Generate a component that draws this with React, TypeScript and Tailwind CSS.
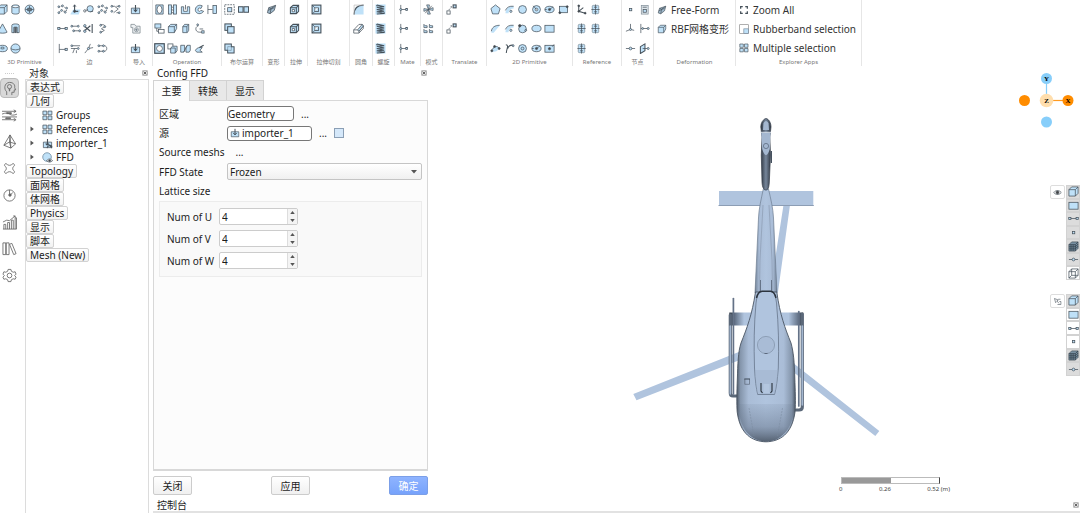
// src/App.tsx
import React, { useState } from 'react';

// Small 12x12 drawings shared by the ribbon, the tree and the view toolbars
const ICONS: Record<string, React.ReactNode> = {
  box: <path d="M1 4 L4 1 H11 V8 L8 11 H1 Z M1 4 H8 V11 M8 4 L11 1" />,
  cylinder: <path d="M2 2.5 C2 .5 10 .5 10 2.5 V9.5 C10 11.5 2 11.5 2 9.5 Z M2 2.5 C2 4.5 10 4.5 10 2.5" />,
  sphereDot: <><circle cx="6" cy="6" r="4.8" /><path d="M1.5 6 H10.5 M6 2 V10" /><path d="M4 4.5 H8 V7.5 H4 Z" fill="#667885" /></>,
  cone: <path d="M6 1 L11 10 C9 11.5 3 11.5 1 10 Z" />,
  tube: <><path d="M2 2.5 C2 .5 10 .5 10 2.5 V10.5 H7.5 V4.5 H4.5 V10.5 H2 Z" /><path d="M4.5 4.5 V11 M7.5 4.5 V11 M6 4.5 V11" strokeWidth="1" /></>,
  torus: <><ellipse cx="6" cy="6" rx="5.3" ry="3.5" /><ellipse cx="6" cy="5.5" rx="2" ry="1" /></>,
  globe: <><circle cx="6" cy="6" r="5" /><path d="M1 6 C3 8 9 8 11 6" /></>,
  scatter: <><path d="M2 3 L6 2 M2 9 L5 7 M7 8 L11 7 M8 3.5 L10 4.5" fill="none" strokeDasharray="1.5 1" /><circle cx="2" cy="3" r="1" /><circle cx="6" cy="2" r="1" /><circle cx="10.5" cy="4.5" r="1" /><circle cx="5" cy="7" r="1" /><circle cx="2" cy="9.5" r="1" /><circle cx="9" cy="9" r="1" /></>,
  axisUp: <><path d="M1 10 L3.5 6 H11.5 L9.5 11.5 H.5 Z" stroke="none" /><path d="M5 1 V8 H9" fill="none" strokeWidth="1.2" /><circle cx="5" cy="8" r="1.2" fill="#444" /><path d="M3.5 3 L5 .8 L6.5 3" fill="none" /></>,
  loop: <><circle cx="7.8" cy="5.2" r="3.4" /><circle cx="2" cy="7.5" r="1.3" fill="#fff" /><path d="M3 7.5 L5 5.5 M8 8.5 L11 8" /></>,
  zigzag: <><path d="M1.5 2.5 H5 L9 5.5 L4 9.5 M7 2.5 H10.5 M7 9.5 H10.5" fill="none" /><circle cx="2" cy="2.5" r="1" /><circle cx="10" cy="2.5" r="1" /><circle cx="10" cy="9.5" r="1" /><circle cx="2" cy="8" r="1" /></>,
  segment: <><path d="M2 6 H10" /><rect x=".8" y="4.8" width="2.4" height="2.4" /><rect x="8.8" y="4.8" width="2.4" height="2.4" /></>,
  parallel: <><path d="M1 3.5 H8 M3 8.5 H11" /><circle cx="2" cy="3.5" r="1" /><circle cx="9" cy="3.5" r="1" /><circle cx="4" cy="8.5" r="1" /><circle cx="10.5" cy="8.5" r="1" /></>,
  scissors: <><path d="M1 3 L8 9 M1 9 L8 3 M10 1 V11" fill="none" strokeWidth="1.2" /><circle cx="2" cy="3" r="1.3" /><circle cx="2" cy="9" r="1.3" /></>,
  squiggle: <><path d="M4 2 C9 1 10 4 6 5.5 C3 7 7 7 8 8 L4 10.5" fill="none" /><circle cx="4" cy="2.5" r="1" /><circle cx="8.5" cy="4" r="1" /><circle cx="4" cy="10" r="1" /></>,
  perp: <><path d="M2.5 1 V11 M2.5 7 H10" /><rect x="8.8" y="5.8" width="2.4" height="2.4" /></>,
  project: <><path d="M1 3 H11 M1 6 H8 M5 6 L3 11 M7 8 V11" fill="none" /><circle cx="2" cy="3" r="1" /><circle cx="9" cy="6" r="1" /></>,
  branch: <><path d="M2 11 L6 6 L8 1 M6 6 L11 5" fill="none" /><circle cx="6" cy="6" r="1.2" /></>,
  hook: <><path d="M2 3 H8 C11.5 3 11.5 9 8 9 H2" fill="none" /><circle cx="2" cy="3" r="1" /><circle cx="7" cy="3" r="1" /><circle cx="7" cy="9" r="1" /><circle cx="2" cy="9" r="1" /></>,
  importIn: <><path d="M1.5 4.5 H10.5 V10.5 H1.5 Z" /><path d="M6 1 V8 M4 6 L6 8.3 L8 6" fill="none" strokeWidth="1.2" /></>,
  camera: <><path d="M1 1.5 H5 L6.5 3.5 H11 V11 H3 V5 H1 Z" fill="#eef1f3" stroke="#7c868d" /><circle cx="7" cy="7.3" r="2.2" fill="none" stroke="#7c868d" /><circle cx="7" cy="7.3" r=".7" /></>,
  ring: <><path d="M2 1 H10 V11 H2 Z" /><ellipse cx="6" cy="6" rx="2.7" ry="4.2" fill="#fff" /></>,
  columns: <><rect x="1.5" y="1" width="3.5" height="10" /><rect x="7" y="1" width="3.5" height="10" /><path d="M5 3 L7 4 M5 6 L7 7 M5 9 L7 10" /></>,
  cup: <><path d="M1.5 3 H4 V8 H8 V3 H10.5 V10.5 H1.5 Z" /><path d="M6 1 V6" /></>,
  rotate: <path d="M9 2 C5 0 1 3 1.5 7 C2 11 8 12 10.5 8 L7.5 7 C6 9 4 8 4.5 5.5 C5 4 6.5 4 7.5 5 Z" />,
  moveIn: <><path d="M1 1 V11 M1 6 H6" fill="none" /><rect x="6.5" y="1.5" width="4" height="9" /></>,
  overlap: <><rect x="1" y="1" width="6.5" height="4.5" /><rect x="5" y="7" width="6" height="4" fill="#fff" /><path d="M3 5.5 V9 H5" fill="none" /></>,
  slab: <><path d="M1.5 4 L4 1.5 H10.5 V6 L8 10.5 H1.5 Z" /><path d="M1.5 4 H8 V10.5 M8 4 L10.5 1.5" fill="none" /></>,
  slab2: <path d="M3 4 L5 1.5 H9.5 V8 L8 10.5 H3 Z M3 4 H7.5 V10 M7.5 4 L9.5 1.5" />,
  orbit: <><path d="M4 1 V4 M3 4 C1 6 2 10 6 10 H10 M6 6.5 H10" fill="none" /><circle cx="4" cy="2" r="1" /><rect x="8.5" y="8.5" width="2.5" height="2.5" /></>,
  holeBox: <><rect x=".8" y=".8" width="10.4" height="10.4" strokeWidth="1.3" /><circle cx="6" cy="6" r="3.2" fill="#fff" /></>,
  boxes: <><rect x="1" y="1" width="5.5" height="5.5" fill="#fff" /><path d="M4 5.5 L6 3.5 H11 V8.5 L9 11 H4 Z M4 5.5 H9 V11" /></>,
  mirror: <path d="M.8 10 V2.5 H5 V8 L4 10 Z M6.5 10 V5 L8 2.5 H11.2 V8 L10 10 Z M4 10 L8 2.5" />,
  sweep: <><path d="M1.5 8 C3 5 6 4.5 9 5 L6.5 8 L9 10 H3 Z" /><path d="M6 5 L10.5 2.5" strokeWidth="1.3" /></>,
  boolDash: <><rect x=".8" y=".8" width="10.4" height="10.4" fill="none" strokeDasharray="2 1" /><rect x="4" y="4" width="4.5" height="4.5" /></>,
  boolSplit: <><rect x=".5" y="3" width="5" height="6" strokeWidth="1.1" /><rect x="6.5" y="3" width="5" height="6" strokeWidth="1.1" /></>,
  boolUnion: <><rect x="1" y="1" width="7" height="7" strokeWidth="1.1" /><rect x="4" y="4" width="7" height="7" strokeWidth="1.1" /></>,
  boolCut: <><path d="M1 1 H8 V4 H11 V11 H4 V8 H1 Z" strokeWidth="1.1" /><path d="M4 8 V4 H8 V8 Z" strokeDasharray="1 1" /></>,
  deform: <><path d="M1.5 9.5 L3 4 L10.5 1.5 L9 7 L4.5 10.5 Z" fill="#9fb9cc" /><path d="M3 4 L5.5 5 L4.5 10.5 M5.5 5 L10.5 1.5 M2 7 L9 4" fill="none" /></>,
  extrude: <><path d="M1.5 4 L4.5 1.5 H10.5 V8 L8 10.5 H1.5 Z" strokeWidth="1.1" /><path d="M1.5 4 H8 V10.5 M8 4 L10.5 1.5" fill="none" strokeWidth="1.1" /><path d="M3.5 6 H6 V8.5 H3.5 Z" fill="#fff" /></>,
  extrudeCut: <><rect x="1.2" y="1.2" width="9.6" height="9.6" strokeWidth="1.2" /><rect x="4.2" y="4.2" width="4" height="4" fill="#fff" /><path d="M1.2 1.2 L4.2 4.2 M8.2 4.2 V8.2 H4.2 M1.2 10.8 L4.2 8.2" /></>,
  fillet: <><path d="M1.2 11.5 C1.2 5 5 1.2 11.5 1.2 V11.5 Z" stroke="none" /><path d="M1.2 11.5 C1.2 5 5 1.2 11.5 1.2" fill="none" strokeWidth="1.3" /><path d="M1.2 11.5 V1.2 H11.5" fill="none" stroke="#bbb" /></>,
  chamfer: <><path d="M.8 7.5 L6.5 1.5 H10 L11.2 3 V6 L6.5 11 H.8 Z" fill="#fff" /><path d="M.8 7.5 H5 L6.5 9 V11 M6.5 9 L11.2 3.5" fill="none" /><path d="M5 7.5 L10 1.5 L11.2 3.3 L6.5 9 Z" /></>,
  helix: <><rect x=".5" y=".5" width="11" height="11" stroke="none" /><path d="M2 1.2 L10 3 L2 3.6 L10 5.4 L2 6 L10 7.8 L2 8.4 L10 10.4 L2 10.8 M2 1.2 V2.5 M10 9 V11" fill="none" strokeWidth="1.1" /></>,
  mate: <><path d="M3 1 V11 M3 6 H9" fill="none" /><circle cx="3" cy="6" r="1.1" /><rect x="8.5" y="5" width="2" height="2" /></>,
  fan: <path d="M6 6 L4 1 H7 Z M6 6 L11 4 V7 Z M6 6 L8 11 H5 Z M6 6 L1 8 V5 Z M6 6 L9.5 2 M6 6 L2.5 10" />,
  pattern: <path d="M1 5 V1.5 L2.5 3 L4.5 3 V5 Z M7 5 V1.5 L8.5 3 L10.5 3 V5 Z M1 10.5 V7 L2.5 8.5 L4.5 8.5 V10.5 Z M7 10.5 V7 L8.5 8.5 L10.5 8.5 V10.5 Z" />,
  translate: <><rect x="1" y="7.5" width="3.5" height="3.5" fill="#fff" /><rect x="7.8" y="1" width="3.2" height="3.2" strokeWidth="1.2" /><path d="M3 6.5 L6.5 3 M5 3 H7" fill="none" strokeDasharray="1.5 .8" /></>,
  pentagon: <path d="M6 1 L11 5 L9.2 10.8 H2.8 L1 5 Z" />,
  arc: <><path d="M1.5 10 C2 4 6 2 10.5 2.5 V5 C7 5 5 7 5 10 Z" stroke="none" /><path d="M1.5 7 C3 3.5 6 2 10.5 2.5" fill="none" /><circle cx="7.5" cy="8" r="1.2" /></>,
  sector: <><path d="M1.5 10.5 C1.5 5 5 2 11 2.5 L7 7 L4 10.5 Z" stroke="none" /><path d="M1.5 9 C2 5 5 2.5 10.5 2.5" fill="none" /></>,
  circle: <circle cx="6" cy="6" r="4.3" />,
  circleDot: <><circle cx="6" cy="6" r="4.3" /><circle cx="6" cy="6" r="1.4" fill="#fff" /><path d="M2.5 2 L6 6" /></>,
  circlePt: <><circle cx="6" cy="6.5" r="4.2" /><circle cx="3" cy="3" r="1.3" fill="#444" /><circle cx="9.5" cy="8" r="1" /></>,
  circleC: <><circle cx="6" cy="6" r="4.3" /><circle cx="6" cy="6" r="1.5" /></>,
  ellipse: <ellipse cx="6" cy="6" rx="5" ry="3.5" />,
  ellipsePt: <><ellipse cx="6" cy="6" rx="5" ry="3.5" /><circle cx="6" cy="6" r="1.2" fill="#444" /><path d="M6 6 L10 3 M1 6 H3" /></>,
  rect: <rect x="1" y="2.5" width="10" height="7.5" />,
  rectPt: <><rect x="1.5" y="2.5" width="9" height="7" /><circle cx="2" cy="9.5" r="1.1" fill="#444" /><circle cx="10" cy="3" r="1.1" fill="#444" /></>,
  rectC: <><rect x="1" y="2.5" width="10" height="7.5" /><circle cx="6" cy="6.2" r="1.2" fill="#444" /><path d="M9 4 L11 1.5" /></>,
  splinePt: <><path d="M1 10 L4 4 C6 2.5 9 4 10.5 6 L7 9 Z" stroke="none" /><path d="M2 8.5 C3 4 8 2 10 6" fill="none" /><circle cx="2" cy="8.5" r="1.1" fill="#444" /><circle cx="5" cy="3.8" r="1.1" fill="#444" /><circle cx="10" cy="6" r="1.1" fill="#444" /></>,
  curve: <><path d="M2 2 C6 2 2.5 7 2.5 11 M4 6 C5 3 8 2 10.5 2.5" fill="none" strokeWidth="1.1" /><circle cx="10" cy="3" r="1" /></>,
  axes: <><path d="M3 1 V8 L10 10 M3 8 L8 4" fill="none" strokeWidth="1.1" /><circle cx="3" cy="8" r="1" fill="#444" /><circle cx="10" cy="10" r="1" fill="#444" /><circle cx="3" cy="2" r="1" fill="#444" /></>,
  datum: <><rect x="2.5" y="1.5" width="7" height="9" rx="1" stroke="#7c8d99" /><path d="M6 .5 V11.5 M1.5 6 H10.5 M4.3 3.5 H7.7 M4.3 8.5 H7.7" fill="none" /></>,
  dot: <rect x="4.8" y="4.8" width="2.6" height="2.6" />,
  card: <><rect x="2.5" y="1.5" width="7.5" height="9.5" fill="#dfe7ec" stroke="#84919a" /><rect x="4.5" y="6" width="3.5" height="3" /><path d="M4 3.5 H8.5" /></>,
  triad: <><path d="M6 1 V7 M1 9 L6 7 L10 8" fill="none" /><circle cx="6" cy="7" r="1.1" /></>,
  nodeH: <><path d="M1 6 H11" /><circle cx="6" cy="6" r="1.5" /></>,
  between: <><path d="M2 1 V11 M2 6 H11" fill="none" /><circle cx="4" cy="6" r="1" /><circle cx="10" cy="6" r="1.1" /></>,
  plane: <><path d="M1.5 4 L6.5 1 V8.5 L1.5 11.5 Z" strokeWidth="1.1" /><path d="M4 6 H11" /><circle cx="10" cy="6" r="1.1" /></>,
  corners: <path d="M2 4.5 V2 H4.5 M7.5 2 H10 V4.5 M10 7.5 V10 H7.5 M4.5 10 H2 V7.5" fill="none" strokeWidth="1.5" />,
  rubber: <><rect x=".8" y=".8" width="10.4" height="10.4" fill="#fff" stroke="#888" /><rect x="5.8" y="5.8" width="5.4" height="5.4" stroke="#789" /></>,
  tiles: <path d="M1 1.2 H5.2 V5.2 H1 Z M6.6 1.2 H10.8 V5.2 H6.6 Z M1 6.6 H5.2 V10.6 H1 Z M6.6 6.6 H10.8 V10.6 H6.6 Z" />,
  ffd: <><circle cx="5.5" cy="5.5" r="4.7" stroke="#68859a" /><path d="M5 9.5 C7 7 9.5 7 11.5 9.5 C9.5 11.5 7 11.5 5 9.5 Z" fill="#fff" /><circle cx="8.3" cy="9.4" r="1" fill="#444" /></>,
  importOff: <><path d="M1.5 4.5 H10.5 V10.5 H1.5 Z" /><path d="M6 1 V8 M4 6 L6 8" fill="none" strokeWidth="1.2" /><path d="M5.5 5 L11 11 M5.5 11 C6 8 10 7 11 9.5" fill="none" strokeWidth="1.1" /></>,
  mesh: <><path d="M1 4 L4 1 H11 V8 L8 11 H1 Z" fill="#7890a2" /><path d="M1 4 H8 V11 M8 4 L11 1 M1 6.3 H8 L11 3.3 M1 8.6 H8 L11 5.6 M3.3 4 V11 M5.6 4 V11" fill="none" stroke="#303e49" /></>,
  wire: <path d="M1 4 L4 1 H11 V8 L8 11 H1 Z M1 4 H8 V11 M8 4 L11 1 M4 1 V8 H11 M4 8 L1 11" fill="none" />,
  eye: <><path d="M1 6 C4 2.5 8 2.5 11 6 C8 9.5 4 9.5 1 6 Z" fill="#fff" strokeWidth="1" /><circle cx="6" cy="6" r="1.9" fill="#444" /></>,
  pick: <><path d="M2 2 L7 4 L5.2 5.2 L8 8.5 M2 2 L3.5 7.5 L5 6" fill="none" /><path d="M7 3 H10 M8.5 6 H10.5 V10 H6" fill="none" /></>,
};

const Icon = ({ name, className = 'w-3 h-3' }: { name: string; className?: string }) => (
  <svg viewBox="0 0 12 12" className={`${className} shrink-0`} fill="#bfe1f8" stroke="#46515a" strokeWidth="0.8" aria-hidden="true">
    {ICONS[name]}
  </svg>
);

interface RibbonGroup {
  label: string;
  width: string;
  cols: string;
  icons: string[];
}

// Empty strings keep a free cell in the icon grid
const GROUPS: RibbonGroup[] = [
  { label: '3D Primitive', width: '-ml-1 w-[58px] pr-[17px]', cols: 'grid-cols-3', icons: ['box', 'cylinder', 'sphereDot', 'cone', 'tube', '', 'torus', 'globe', ''] },
  { label: '边', width: 'w-[72px] pl-[2px] pr-[3px]', cols: 'grid-cols-5', icons: ['scatter', 'axisUp', 'loop', 'scatter', 'zigzag', 'segment', 'parallel', 'scissors', 'squiggle', '', 'perp', 'project', 'branch', 'hook', ''] },
  { label: '导入', width: 'w-[27px] pr-[8px]', cols: 'grid-cols-1', icons: ['importIn', 'camera', 'importIn'] },
  { label: 'Operation', width: 'w-[69px] pr-[2px]', cols: 'grid-cols-5', icons: ['ring', 'columns', 'cup', 'rotate', 'moveIn', 'overlap', 'slab', 'slab2', 'orbit', '', 'holeBox', 'boxes', 'mirror', 'sweep', ''] },
  { label: '布尔运算', width: 'w-[41px] pl-[1px] pr-[12px]', cols: 'grid-cols-2', icons: ['boolDash', 'boolSplit', 'boolUnion', '', 'boolCut', ''] },
  { label: '变形', width: 'w-[22px] pr-[4px]', cols: 'grid-cols-1', icons: ['deform', '', ''] },
  { label: '拉伸', width: 'w-[23px] pr-[4px]', cols: 'grid-cols-1', icons: ['extrude', 'extrude', ''] },
  { label: '拉伸切割', width: 'w-[42px] pl-[1px] pr-[25px]', cols: 'grid-cols-1', icons: ['extrudeCut', 'extrudeCut', ''] },
  { label: '圆角', width: 'w-[23px] pr-[6px]', cols: 'grid-cols-1', icons: ['fillet', 'chamfer', ''] },
  { label: '螺旋', width: 'w-[22px] pr-[6px]', cols: 'grid-cols-1', icons: ['helix', 'helix', 'helix'] },
  { label: 'Mate', width: 'w-[26px] pr-[9px]', cols: 'grid-cols-1', icons: ['mate', 'mate', 'mate'] },
  { label: '模式', width: 'w-[22px] pr-[6px]', cols: 'grid-cols-1', icons: ['fan', 'pattern', ''] },
  { label: 'Translate', width: 'w-[44px] pl-[1px] pr-[28px]', cols: 'grid-cols-1', icons: ['translate', 'translate', ''] },
  { label: '2D Primitive', width: 'w-[86px] pl-[2px] pr-[2px]', cols: 'grid-cols-6', icons: ['pentagon', 'arc', 'circle', 'circleDot', 'ellipsePt', 'rectPt', 'sector', 'arc', 'circlePt', 'ellipse', 'rect', '', 'splinePt', 'curve', 'circleC', 'ellipsePt', 'rectC', ''] },
  { label: 'Reference', width: 'w-[49px] pl-[2px] pr-[19px]', cols: 'grid-cols-2', icons: ['axes', 'datum', 'datum', 'datum', 'datum', ''] },
  { label: '节点', width: 'w-[32px] pl-[2px] pr-[2px]', cols: 'grid-cols-2', icons: ['dot', 'card', 'triad', 'between', 'nodeH', 'plane'] },
];

const TEXT_GROUPS = [
  { label: 'Deformation', width: 'w-[82px] pl-[3px]', items: [['deform', 'Free-Form'], ['slab', 'RBF网格变形']] },
  { label: 'Explorer Apps', width: 'w-[126px] pl-[3px]', items: [['corners', 'Zoom All'], ['rubber', 'Rubberband selection'], ['tiles', 'Multiple selection']] },
];

const GroupLabel = ({ children }: { children: string }) => (
  <span className="absolute inset-x-0 bottom-0 text-[6px] leading-[8px] text-center text-[#777] whitespace-nowrap">{children}</span>
);

const Ribbon = () => (
  <header className="flex h-[66px] shrink-0 overflow-hidden">
    {GROUPS.map((group) => (
      <div key={group.label} className={`relative shrink-0 border-r border-[#e6e6e6] ${group.width}`}>
        <div className={`grid h-[58px] grid-rows-3 ${group.cols}`}>
          {group.icons.map((name, i) =>
            name ? (
              <button key={i} aria-label={`${group.label} ${name}`} className="flex items-center justify-center min-w-0">
                <Icon name={name} className="w-[11px] h-[11px]" />
              </button>
            ) : (
              <span key={i} />
            )
          )}
        </div>
        <GroupLabel>{group.label}</GroupLabel>
      </div>
    ))}
    {TEXT_GROUPS.map((group) => (
      <div key={group.label} className={`relative shrink-0 border-r border-[#e6e6e6] ${group.width}`}>
        <div className="grid h-[58px] grid-rows-3">
          {group.items.map(([icon, text]) => (
            <button key={text} className="flex items-center gap-1 text-left text-[#333] whitespace-nowrap">
              <Icon name={icon} className="w-[10px] h-[10px]" />
              {text}
            </button>
          ))}
        </div>
        <GroupLabel>{group.label}</GroupLabel>
      </div>
    ))}
  </header>
);

const RAIL: { label: string; art: React.ReactNode }[] = [
  { label: 'Model', art: <><path d="M5 15 V11.5 C2 9 2 2 8 1.5 C13 1.5 14 5 13.5 7 L14.5 9.5 H13 V12 H10.5 V15" /><circle cx="8" cy="6" r="2.2" /><path d="M8 8.2 V11 M7 9.5 H9" /></> },
  { label: 'Flow', art: <><path d="M0 3.5 H15 M0 6.5 C4 5 6 5 8 6.5 C10 8 13 8 16 6.5 M0 9.5 H16 M0 12.5 H14 M12.5 2 L15 3.5 L12.5 5 M12.5 11 L15 12.5 L12.5 14" /><path d="M5 5 H10 V6 H5 Z M4 10.5 H9 V11.5 H4 Z" fill="#666" /></> },
  { label: 'Mesh', art: <path d="M8.5 1 L2 12 L9.5 15 L14.5 10.5 Z M8.5 1 L9.5 15 M2 12 L8 8.5 L14.5 10.5 M8 8.5 L8.5 1 M8 8.5 L9.5 15" /> },
  { label: 'Solve', art: <path d="M3 3.5 C4 2 5 3 6 4.2 Q8 5 10 4.2 C11 3 12 2 13 3.5 C14 5 12.5 5.5 11.8 6.5 Q11 8 11.8 9.5 C12.5 10.5 14 11 13 12.5 C12 14 11 13 10 11.8 Q8 11 6 11.8 C5 13 4 14 3 12.5 C2 11 3.5 10.5 4.2 9.5 Q5 8 4.2 6.5 C3.5 5.5 2 5 3 3.5 Z" /> },
  { label: 'Monitor', art: <><circle cx="8" cy="8" r="6" /><path d="M8 8 V2 M8 8 L11.5 5" /><circle cx="8.5" cy="7.5" r="1.3" fill="#666" /></> },
  { label: 'Charts', art: <path d="M2 15 V10 H4 V15 M6 15 V8 H8 V15 M10 15 V5.5 H12 V15 M14 15 V3 H15.5 V15 M1 7.5 L5 5.5 L8 6 L14 1 M12 1 H14 V3 M1 15 H15.5" /> },
  { label: 'Library', art: <path d="M1 2 H4 V14.5 H1 Z M4.5 2 H7.5 V14.5 H4.5 Z M8 3.5 L10.5 2.5 L15 13.5 L12.5 14.5 Z" /> },
  { label: 'Settings', art: <><path d="M6.5 1.5 H9.5 L10 3.5 L12 4.5 L14 4 L15 6.5 L13.5 8 L15 9.8 L14 12 L12 11.5 L10 12.5 L9.5 14.5 H6.5 L6 12.5 L4 11.5 L2 12 L1 9.8 L2.5 8 L1 6.5 L2 4 L4 4.5 L6 3.5 Z" /><circle cx="8" cy="8" r="2.5" /></> },
];

const Rail = () => (
  <nav className="w-[25px] shrink-0 pt-[7px]">
    <div className="ml-[5px] mb-[1px] w-[9px] border-t border-dotted border-[#ccc]" />
    <ul className="flex flex-col h-[214px]">
      {RAIL.map((item, i) => (
        <li key={item.label} className="flex flex-1 items-center">
          <button aria-label={item.label} className={`flex w-[19px] h-[20px] items-center justify-center rounded-sm ${i === 0 ? 'border border-[#bbb] bg-[#d8d8d8]' : ''}`}>
            <svg viewBox="0 0 16 16" className="w-[15px] h-[15px] shrink-0" fill="none" stroke="#666" strokeWidth="0.9">{item.art}</svg>
          </button>
        </li>
      ))}
    </ul>
  </nav>
);

const CloseButton = ({ label }: { label: string }) => (
  <button aria-label={label} className="w-[6px] h-[6px]">
    <svg viewBox="0 0 6 6" className="w-[6px] h-[6px]" fill="#ddd" stroke="#999" strokeWidth="0.7">
      <rect x=".4" y=".4" width="5.2" height="5.2" rx="1" />
      <path d="M1.6 1.6 L4.4 4.4 M4.4 1.6 L1.6 4.4" stroke="#333" />
    </svg>
  </button>
);

type TreeRow = { text: string; icon?: string; arrow?: boolean };

const TREE: TreeRow[] = [
  { text: '表达式' },
  { text: '几何' },
  { text: 'Groups', icon: 'tiles' },
  { text: 'References', icon: 'tiles', arrow: true },
  { text: 'importer_1', icon: 'importOff', arrow: true },
  { text: 'FFD', icon: 'ffd', arrow: true },
  { text: 'Topology' },
  { text: '面网格' },
  { text: '体网格' },
  { text: 'Physics' },
  { text: '显示' },
  { text: '脚本' },
  { text: 'Mesh (New)' },
];

const ObjectTree = () => (
  <aside className="flex w-[124px] shrink-0 flex-col">
    <div className="flex h-[13px] items-center justify-between pl-1 pr-[1px]">
      <h2>对象</h2>
      <CloseButton label="Close objects" />
    </div>
    <ul className="flex-1 border border-b-0 border-[#dcdcdc]">
      {TREE.map((row) => (
        <li key={row.text} className="flex h-[14px] items-center">
          {row.icon ? (
            <button className="flex items-center pl-1 text-left">
              <span className="flex w-3 items-center">
                {row.arrow && <svg viewBox="0 0 4 6" className="w-1 h-[6px]" fill="#555"><path d="M0.5 0.5 L3.8 3 L0.5 5.5 Z" /></svg>}
              </span>
              <Icon name={row.icon} className="w-[11px] h-[11px]" />
              <span className="pl-[3px]">{row.text}</span>
            </button>
          ) : (
            <button className="h-[14px] rounded-[2px] border border-[#d2d2d2] bg-gradient-to-b from-white to-[#f2f2f2] px-[3px] leading-[12px]">{row.text}</button>
          )}
        </li>
      ))}
    </ul>
  </aside>
);

const Spinner = ({ label }: { label: string }) => {
  const [value, setValue] = useState(4);
  const id = label.replace(/ /g, '-');
  return (
    <div className="flex items-center">
      <label htmlFor={id} className="w-[52px] whitespace-nowrap">{label}</label>
      <div className="flex h-[17px] w-[79px] overflow-hidden rounded-[2px] border border-[#ccc] bg-white">
        <input
          id={id}
          value={value}
          onChange={(e) => setValue(Number(e.target.value) || 0)}
          className="w-0 flex-1 pl-[2px] outline-none"
        />
        <div className="flex w-[10px] flex-col border-l border-[#ddd] bg-[#f4f4f4]">
          <button aria-label={`${label} up`} onClick={() => setValue(value + 1)} className="flex flex-1 items-center justify-center">
            <svg viewBox="0 0 6 4" className="w-[5px] h-[3px]" fill="#555"><path d="M0 4 L3 0 L6 4 Z" /></svg>
          </button>
          <button aria-label={`${label} down`} onClick={() => setValue(value - 1)} className="flex flex-1 items-center justify-center">
            <svg viewBox="0 0 6 4" className="w-[5px] h-[3px]" fill="#555"><path d="M0 0 L3 4 L6 0 Z" /></svg>
          </button>
        </div>
      </div>
    </div>
  );
};

const ConfigPanel = () => {
  const [tab, setTab] = useState('主要');
  const [region, setRegion] = useState('Geometry');
  const [source, setSource] = useState('importer_1');

  return (
    <section className="flex w-[275px] shrink-0 flex-col pb-1">
      <div className="flex h-[14px] items-center justify-between pl-1 pr-[1px]">
        <h2>Config FFD</h2>
        <CloseButton label="Close config" />
      </div>
      <div role="tablist" className="flex h-5">
        {['主要', '转换', '显示'].map((name) => (
          <button
            key={name}
            role="tab"
            aria-selected={tab === name}
            onClick={() => setTab(name)}
            className={`w-[37px] border border-[#d2d2d2] ${tab === name ? 'z-10 -mb-px border-b-0 bg-[#fcfcfc]' : 'border-b-0 border-l-0 bg-[#e8e8e8]'}`}
          >
            {name}
          </button>
        ))}
      </div>
      <div className="flex-1 border border-b-2 border-[#d8d8d8] bg-[#fcfcfc] px-[5px] pt-[3px]">
        <div className="grid h-[97px] grid-rows-5">
          <div className="flex items-center">
            <label htmlFor="region" className="w-[68px]">区域</label>
            <input id="region" value={region} onChange={(e) => setRegion(e.target.value)} className="h-[15px] w-[67px] rounded-[3px] border border-[#777] bg-white outline-none" />
            <button aria-label="Browse region" className="pl-[7px]">...</button>
          </div>
          <div className="flex items-center">
            <label htmlFor="source" className="w-[68px]">源</label>
            <div className="flex h-[15px] w-[85px] items-center gap-[2px] rounded-[3px] border border-[#777] bg-white pl-[2px]">
              <Icon name="importIn" className="w-[10px] h-[10px]" />
              <input id="source" value={source} onChange={(e) => setSource(e.target.value)} className="w-0 flex-1 outline-none" />
            </div>
            <button aria-label="Browse source" className="pl-[7px]">...</button>
            <button aria-label="Source colour" className="ml-[7px] h-[10px] w-[10px] border border-[#8b9fb5] bg-[#d5e8fa]" />
          </div>
          <div className="flex items-center">
            <span>Source meshs</span>
            <button aria-label="Browse meshes" className="pl-[11px]">...</button>
          </div>
          <div className="flex items-center">
            <label htmlFor="state" className="w-[68px]">FFD State</label>
            <div className="relative flex-1">
              <select id="state" className="block h-[17px] w-full appearance-none rounded-[2px] border border-[#c4c4c4] bg-gradient-to-b from-white to-[#f0f0f0] pl-[2px]">
                <option>Frozen</option>
              </select>
              <svg viewBox="0 0 6 4" className="pointer-events-none absolute right-[5px] top-[7px] w-[6px] h-1" fill="#555"><path d="M0 0 L3 3.5 L6 0 Z" /></svg>
            </div>
          </div>
          <div className="flex items-center">Lattice size</div>
        </div>
        <div className="flex flex-col gap-[5px] border border-[#ececec] bg-[#f9f9f9] px-[7px] pt-[6px] pb-[7px]">
          <Spinner label="Num of U" />
          <Spinner label="Num of V" />
          <Spinner label="Num of W" />
        </div>
      </div>
      <div className="mt-[5px] flex justify-between">
        <button className="h-[19px] w-[39px] rounded-[2px] border border-[#ccc] bg-gradient-to-b from-white to-[#f0f0f0]">关闭</button>
        <button className="h-[19px] w-[39px] rounded-[2px] border border-[#ccc] bg-gradient-to-b from-white to-[#f0f0f0]">应用</button>
        <button className="h-[19px] w-[39px] rounded-[2px] border border-[#7b9fe8] bg-gradient-to-b from-[#8fb4ff] to-[#76a2fb] text-white">确定</button>
      </div>
    </section>
  );
};

const Helicopter = () => (
  <svg viewBox="428 66 652 433" className="h-full w-full" aria-label="Helicopter model">
    <defs>
      <linearGradient id="hull">
        <stop offset="0" stopColor="#4d5866" />
        <stop offset="0.06" stopColor="#8495ab" />
        <stop offset="0.2" stopColor="#aabdd7" />
        <stop offset="0.5" stopColor="#b0c4de" />
        <stop offset="0.8" stopColor="#aabdd7" />
        <stop offset="0.94" stopColor="#8495ab" />
        <stop offset="1" stopColor="#4d5866" />
      </linearGradient>
      <linearGradient id="nose" x1="0" y1="0" x2="0" y2="1">
        <stop offset="0" stopColor="#5c6b80" stopOpacity="0.1" />
        <stop offset="0.6" stopColor="#566479" stopOpacity="0.4" />
        <stop offset="1" stopColor="#38424f" stopOpacity="0.75" />
      </linearGradient>
      <linearGradient id="fin">
        <stop offset="0" stopColor="#2f3742" />
        <stop offset="0.5" stopColor="#76869b" />
        <stop offset="1" stopColor="#2f3742" />
      </linearGradient>
      <linearGradient id="strut">
        <stop offset="0" stopColor="#2c343e" />
        <stop offset="0.08" stopColor="#66758a" />
        <stop offset="0.2" stopColor="#b0c4de" />
        <stop offset="0.8" stopColor="#b0c4de" />
        <stop offset="0.93" stopColor="#66758a" />
        <stop offset="1" stopColor="#2c343e" />
      </linearGradient>
    </defs>
    {/* rotor blades */}
    <path d="M783.5 205 H790 L778 292 H770 Z M745 349.5 V358 L636.5 400.3 L633.3 394 Z M790 360.5 V369.5 L875.3 436 L879.3 431 Z" fill="#b0c4de" />
    {/* stabilizer */}
    <path d="M719 191 H813.3 V205.5 H719 Z" fill="#b0c4de" />
    <path d="M718.5 205.5 H813.8" stroke="#8c9db4" />
    {/* landing gear */}
    <rect x="729.3" y="312.5" width="74" height="13" fill="url(#strut)" />
    <g fill="none" strokeLinecap="round">
      <path d="M730.3 315 V393 Q730.3 396 733 396 H738" stroke="#5b6879" strokeWidth="3.2" />
      <path d="M730.3 326 V394" stroke="#a3b6cf" strokeWidth="1.6" />
      <path d="M733.4 298.5 V394" stroke="#647287" strokeWidth="1.7" />
      <path d="M802.3 314 V407 Q802.3 410 799 410 H795" stroke="#5b6879" strokeWidth="3.2" />
      <path d="M802.3 326 V405" stroke="#a3b6cf" strokeWidth="1.6" />
      <path d="M798.8 311.5 V406" stroke="#647287" strokeWidth="1.7" />
    </g>
    {/* tail boom */}
    <path d="M763.3 189 H768.5 C771 200 773 208 773.5 218 L777 293 H755 L758.5 218 C759 208 761 200 763.3 189 Z" fill="url(#hull)" stroke="#6f7e92" strokeWidth="0.7" />
    <path d="M763 205 L760 260 L759.5 292 M769 205 L772 260 L772.5 292" fill="none" stroke="#8696ab" strokeWidth="0.6" />
    <path d="M760.5 280 V292 M771.5 280 V292" stroke="#667488" />
    {/* tail fin */}
    <path d="M766 118.5 C763 119 760.8 123 760.8 127 L762 137 L761.3 155 L762 182 C762.3 188 764 190 765.8 190 C768 190 769 188 769.3 182 L770.5 155 L769.8 137 L771 127 C771 123 769 119 766 118.5 Z" fill="url(#fin)" stroke="#303946" strokeWidth="0.7" />
    <path d="M763.5 123 Q766 119 768.5 123 L769 130 H763 Z M761.3 133 H770.5 L769.8 149 Q766 161 762.2 149 Z" fill="#a4b7d0" />
    <path d="M760.8 132.3 H771" stroke="#dce6f2" />
    <circle cx="766" cy="146" r="2.6" fill="none" stroke="#566478" strokeWidth="0.7" />
    <path d="M771.3 151 V163" stroke="#465260" strokeWidth="1.4" />
    {/* fuselage */}
    <path d="M755.5 292 C752 315 747 328 741 343 C738 352 737.8 365 737.4 378 C736.8 392 736.6 405 737.2 412 C740 434 752 441.5 766 441.8 C780 441.5 792 434 795 412 C795.8 403 795.2 390 794.8 378 C794.4 362 793.5 352 791 343 C785 328 780 315 776.8 292 Z" fill="url(#hull)" stroke="#4a5563" strokeWidth="0.9" />
    <path d="M739 404 H793.5 C794.5 430 780 441.5 766 441.5 C752 441.5 738 430 739 404 Z" fill="url(#nose)" />
    <path d="M749 408 L754 436 M782.5 408 L777.5 436" stroke="#78889d" strokeWidth="0.5" strokeDasharray="2 1" />
    <path d="M756 303 Q757 292 762 291.5 H770.5 Q775.5 292 776.5 303 C778.5 325 779 345 778.3 368 Q777 386 774.5 394.5 H757.7 Q755.5 386 754.5 368 C753.8 345 754 325 756 303 Z" fill="#b0c4de" stroke="#66758a" strokeWidth="0.8" />
    <path d="M756.5 298 Q758 291.5 762 291.3 H770.5 Q774.5 291.5 776 298" fill="none" stroke="#2c343e" strokeWidth="1.5" />
    <path d="M755 370 H778 Q777 386 774.5 394 H757.7 Q755.5 386 755 370 Z" fill="#9fb2cb" opacity="0.5" />
    <circle cx="766" cy="345" r="8.6" fill="#a9bcd6" stroke="#7f90a6" strokeWidth="0.7" />
    <path d="M764.5 353.5 H767.5" stroke="#4f5c6e" strokeWidth="0.8" />
    <path d="M761 383 V391 L762.5 393 M772 383 V391 L770.5 393" fill="none" stroke="#27303a" strokeWidth="1.1" />
    <path d="M763.5 384 H769.5 V393 H763.5 Z" fill="#b3c6df" />
    <path d="M744.8 379 V384.3 H749.5 V379" fill="none" stroke="#5b687a" strokeWidth="0.7" />
    <path d="M744.3 379 H750" stroke="#3d4857" strokeWidth="1" />
  </svg>
);

const AxisGizmo = () => (
  <svg viewBox="0 0 58 56" className="absolute right-[4px] top-[6px] h-[56px] w-[58px]" fontFamily="Liberation Serif, serif" fontSize="7" fontWeight="700" textAnchor="middle">
    <path d="M28.5 6.5 V28" stroke="#87cefa" strokeWidth="1.2" />
    <path d="M28.5 28.5 H50" stroke="#ff9a20" strokeWidth="1.2" />
    <circle cx="28.5" cy="6.5" r="5.5" fill="#87cefa" />
    <circle cx="28.5" cy="50" r="5.5" fill="#87cefa" />
    <circle cx="6.5" cy="28.5" r="5.5" fill="#ff8c00" />
    <circle cx="50" cy="28.5" r="5.5" fill="#ff8c00" />
    <circle cx="28.5" cy="28.5" r="6.8" fill="#ffdead" />
    <text x="28.5" y="9">Y</text>
    <text x="28.5" y="31">Z</text>
    <text x="50" y="31">X</text>
  </svg>
);

const ViewBar = ({ lead, items, active, className }: { lead: string; items: string[]; active: string[]; className: string }) => (
  <div className={`absolute right-0 flex gap-[1px] ${className}`}>
    <button aria-label={lead} className="flex h-[14px] w-[15px] items-center justify-center rounded-[2px] border border-[#ddd] bg-white">
      <Icon name={lead} className="w-[9px] h-[9px]" />
    </button>
    <div className="flex w-[14px] flex-col">
      {items.map((name) => (
        <button key={name} aria-label={`${lead} ${name}`} className={`flex flex-1 items-center justify-center border border-[#d2d2d2] ${active.includes(name) ? 'bg-[#dcdcdc]' : 'bg-white'}`}>
          <Icon name={name} className="w-[11px] h-[11px]" />
        </button>
      ))}
    </div>
  </div>
);

const Viewport = () => (
  <main className="relative min-w-0 flex-1">
    <Helicopter />
    <AxisGizmo />
    <ViewBar lead="eye" items={['box', 'rect', 'segment', 'dot', 'mesh', 'nodeH', 'wire']} active={['box', 'rect', 'segment', 'dot', 'mesh', 'nodeH']} className="top-[119px] h-[95px]" />
    <ViewBar lead="pick" items={['box', 'rect', 'segment', 'dot', 'mesh', 'nodeH']} active={['box', 'mesh', 'nodeH']} className="top-[228px] h-[82px]" />
    <div className="absolute bottom-[6px] right-[135px] w-[109px] text-[6px] leading-[8px] text-[#444]">
      <div className="mx-auto flex h-[7px] w-[99px] border border-[#bbb] border-r-[#444] bg-white">
        <div className="w-1/2 bg-[#999]" />
      </div>
      <div className="flex justify-between pl-[3px] pt-[1px] whitespace-nowrap">
        <span>0</span>
        <span>0.26</span>
        <span className="-mr-[5px]">0.52 (m)</span>
      </div>
    </div>
  </main>
);

export default function App() {
  return (
    <div className="flex h-screen flex-col overflow-hidden bg-white font-['Noto_Sans','Noto_Sans_CJK_SC',sans-serif] text-[10px] leading-[14px] text-[#1c1c1c]">
      <Ribbon />
      <div className="flex min-h-0 flex-1 gap-1">
        <div className="flex">
          <Rail />
          <ObjectTree />
        </div>
        <div className="flex min-w-0 flex-1 flex-col">
          <div className="flex min-h-0 flex-1">
            <ConfigPanel />
            <Viewport />
          </div>
          <footer className="flex h-[14px] shrink-0 items-center justify-between border-b-2 border-[#e2e2e2] pl-1 pr-[1px]">
            <h2>控制台</h2>
            <CloseButton label="Close console" />
          </footer>
        </div>
      </div>
    </div>
  );
}
